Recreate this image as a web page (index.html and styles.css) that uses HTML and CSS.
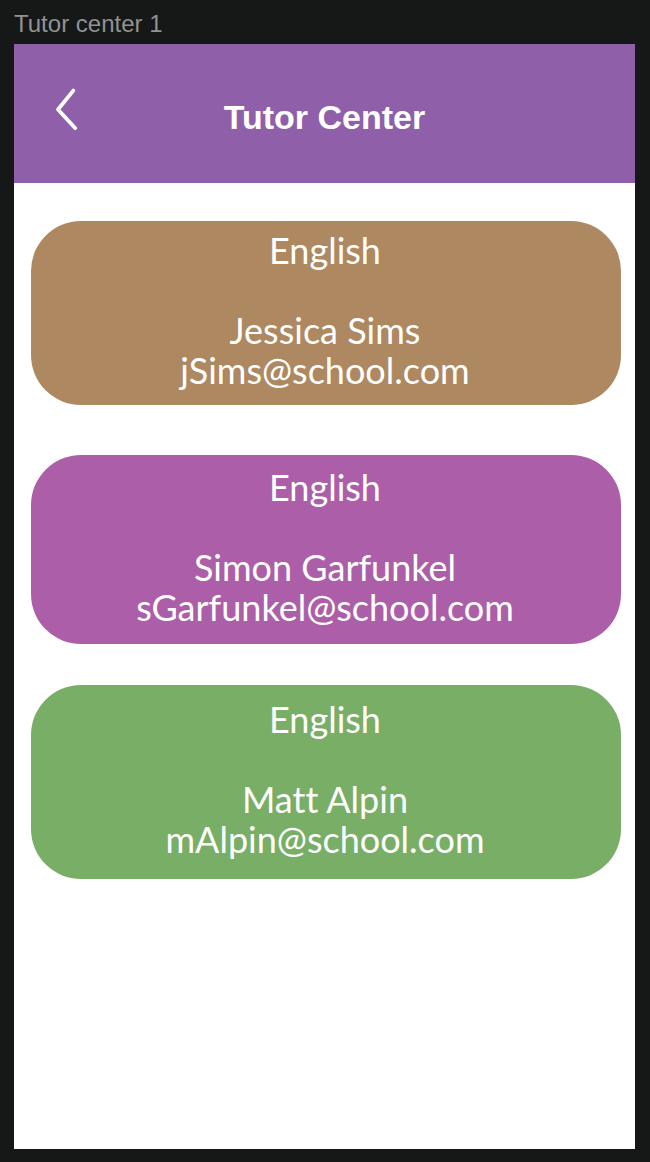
FILE: index.html
```html
<!DOCTYPE html>
<html lang="en">
<head>
<meta charset="utf-8">
<meta name="viewport" content="width=device-width, initial-scale=1">
<title>Tutor Center</title>
<link rel="stylesheet" href="styles.css">
</head>
<body>
<div class="frame-label">Tutor center 1</div>
<main class="screen">
  <header class="topbar">
    <button class="back" type="button" aria-label="Back">
      <svg viewBox="0 0 24 44" width="24" height="44" fill="none" stroke="currentColor" stroke-width="3.8" stroke-linecap="round" stroke-linejoin="round"><path d="M19.3 3.6 4 22.5 21.3 41.2"/></svg>
    </button>
    <h1 class="title">Tutor Center</h1>
  </header>
  <div class="cards">
    <section class="card card-brown">
      <h2 class="subject">English</h2>
      <p class="name">Jessica Sims</p>
      <p class="email">jSims@school.com</p>
    </section>
    <section class="card card-pink">
      <h2 class="subject">English</h2>
      <p class="name">Simon Garfunkel</p>
      <p class="email">sGarfunkel@school.com</p>
    </section>
    <section class="card card-green">
      <h2 class="subject">English</h2>
      <p class="name">Matt Alpin</p>
      <p class="email">mAlpin@school.com</p>
    </section>
  </div>
</main>
</body>
</html>
```
FILE: styles.css
```css
* { box-sizing: border-box; }
body {
  margin: 0;
  min-height: 100vh;
  padding: 0 15px 13px 14px;
  display: flex;
  flex-direction: column;
  background: #161817;
  color: #fff;
  font-family: Optima, Lato, sans-serif;
}
.frame-label {
  height: 44px;
  padding-top: 4px;
  font: 24px/40px "Liberation Sans", sans-serif;
  color: #929292;
}
.screen { flex: 1; background: #fff; }
.topbar {
  display: grid;
  grid-template-columns: 80px 1fr 80px;
  align-items: start;
  height: 139px;
  background: #8f5faa;
}
.back {
  display: flex;
  justify-self: end;
  margin: 43px 16px 0 0;
  padding: 0;
  border: 0;
  background: none;
  color: #fff;
}
.title {
  margin: 53px 0 0;
  text-align: center;
  font: 700 34px/40px "Arial Rounded MT Bold", "Liberation Sans", sans-serif;
}
.cards { padding: 38px 14px 0 17px; }
.card {
  border-radius: 50px;
  padding-right: 2px;
  text-align: center;
  font-size: 36px;
  line-height: 40px;
  font-variant-ligatures: none;
}
.card-brown { padding-top: 9px; padding-bottom: 15px; background: #ae8860; }
.card-pink { margin-top: 50px; padding-top: 12px; padding-bottom: 17px; background: #ac5fa8; }
.card-green { margin-top: 41px; padding-top: 14px; padding-bottom: 20px; background: #79ae66; }
.subject, .name, .email { margin: 0; font: inherit; font-variant-ligatures: none; }
.name { margin-top: 40px; }
```
